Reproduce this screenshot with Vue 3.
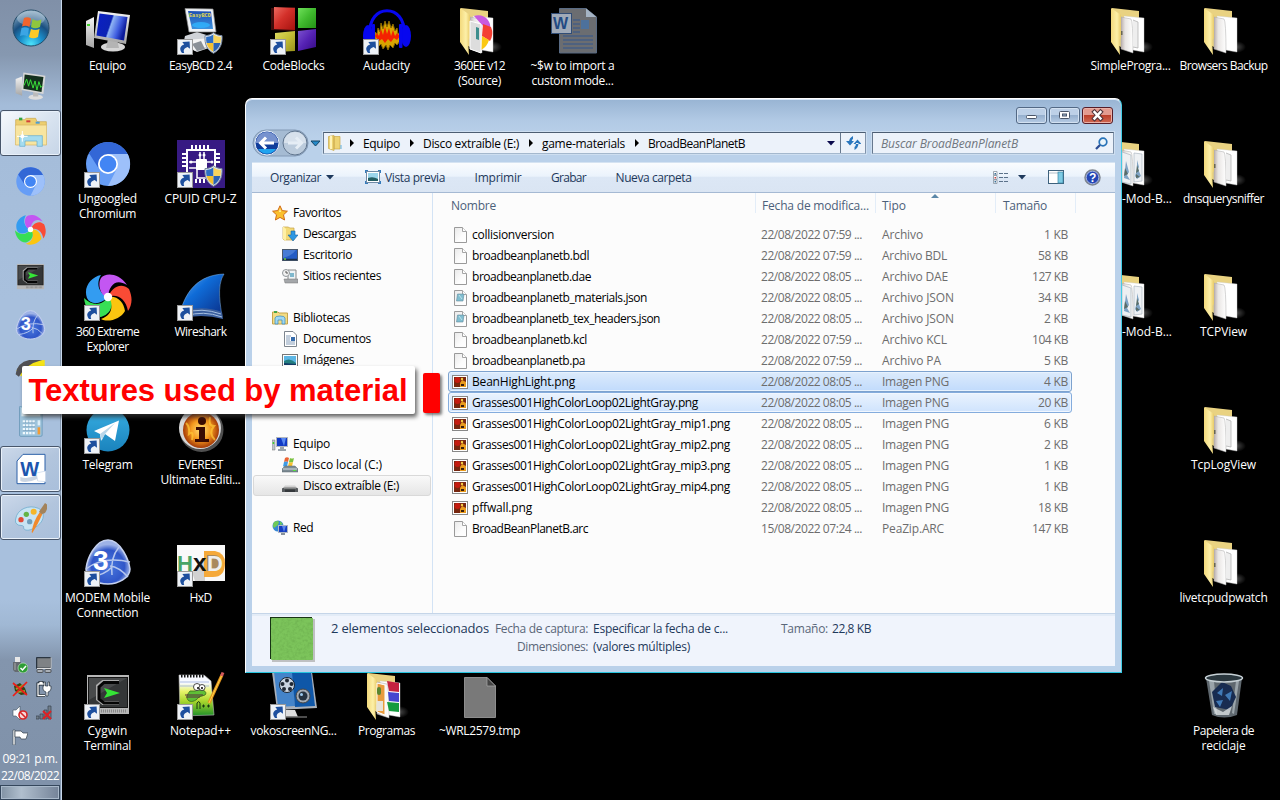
<script setup>
const vFit = {
  mounted(el, { value }) {
    const natural = el.getBoundingClientRect().width
    const count = el.textContent.length
    el.style.letterSpacing = ((value - natural) / count).toFixed(3) + 'px'
  },
}

// Lettering drawn on top of the icon artwork, in the icon's 48-unit grid
const SANS = 'Liberation Sans, sans-serif'
const letters = {
  easybcd: [{ x: 12, y: 10, s: 5.2, c: '#e6dc48', t: 'EasyBCD', f: 'Liberation Mono, monospace' }],
  worddoc: [{ x: 4, y: 22, s: 16, c: '#234a83', t: 'W', f: SANS }],
  word: [{ x: 8, y: 34, s: 30, c: '#1d55ae', t: 'W', f: SANS }],
  modem: [{ x: 9, y: 31, s: 28, c: '#fff', t: '3', f: SANS }],
  hxd: [
    { x: 0, y: 32, s: 22, c: '#49a568', t: 'H', f: SANS },
    { x: 16, y: 32, s: 24, c: '#111', t: 'x', f: SANS },
    { x: 30, y: 32, s: 22, c: '#efefef', t: 'D', f: SANS },
  ],
}

const desktop = [
  { x: 84, y: 7, icon: 'pc', lines: [['Equipo', 37]] },
  { x: 177, y: 7, icon: 'easybcd', cut: 1, shield: 1, lines: [['EasyBCD 2.4', 63]] },
  { x: 270, y: 7, icon: 'codeblocks', cut: 1, lines: [['CodeBlocks', 62]] },
  { x: 363, y: 7, icon: 'audacity', cut: 1, lines: [['Audacity', 47]] },
  { x: 456, y: 7, icon: 'folder360', lines: [['360EE v12', 51], ['(Source)', 43]] },
  { x: 549, y: 7, icon: 'worddoc', lines: [['~$w to import a', 84], ['custom mode...', 82]] },
  { x: 1107, y: 7, icon: 'folderb', lines: [['SimpleProgra...', 80]] },
  { x: 1200, y: 7, icon: 'folder', lines: [['Browsers Backup', 88]] },
  { x: 84, y: 140, icon: 'chromium', cut: 1, lines: [['Ungoogled', 59], ['Chromium', 57]] },
  { x: 177, y: 140, icon: 'cpuz', cut: 1, shield: 1, lines: [['CPUID CPU-Z', 72]] },
  { x: 1107, y: 140, icon: 'folderimg', lines: [['-Mod-B...', 50]], shift: 1 },
  { x: 1200, y: 140, icon: 'folderb', lines: [['dnsquerysniffer', 81]] },
  { x: 84, y: 273, icon: 'swirl', cut: 1, lines: [['360 Extreme', 63], ['Explorer', 42]] },
  { x: 177, y: 273, icon: 'wireshark', cut: 1, lines: [['Wireshark', 52]] },
  { x: 1107, y: 273, icon: 'folderimg', lines: [['-Mod-B...', 50]], shift: 1 },
  { x: 1200, y: 273, icon: 'folder', lines: [['TCPView', 47]] },
  { x: 84, y: 406, icon: 'telegram', cut: 1, lines: [['Telegram', 50]] },
  { x: 177, y: 406, icon: 'everest', lines: [['EVEREST', 45], ['Ultimate Editi...', 80]] },
  { x: 1200, y: 406, icon: 'folderb', lines: [['TcpLogView', 65]] },
  { x: 84, y: 539, icon: 'modem', cut: 1, lines: [['MODEM Mobile', 85], ['Connection', 62]] },
  { x: 177, y: 539, icon: 'hxd', cut: 1, lines: [['HxD', 22]] },
  { x: 1200, y: 539, icon: 'folderb', lines: [['livetcpudpwatch', 88]] },
  { x: 84, y: 672, icon: 'cygwin', cut: 1, lines: [['Cygwin', 40], ['Terminal', 47]] },
  { x: 177, y: 672, icon: 'notepad', cut: 1, lines: [['Notepad++', 61]] },
  { x: 270, y: 672, icon: 'voko', cut: 1, lines: [['vokoscreenNG...', 86]] },
  { x: 363, y: 672, icon: 'folderprog', lines: [['Programas', 57]] },
  { x: 456, y: 672, icon: 'tmp', lines: [['~WRL2579.tmp', 81]] },
  { x: 1200, y: 672, icon: 'bin', lines: [['Papelera de', 61], ['reciclaje', 44]] },
]

const pinned = [
  { icon: 'taskmgr' },
  { icon: 'explorer', state: 'active' },
  { icon: 'chromium' },
  { icon: 'swirl' },
  { icon: 'cygwin' },
  { icon: 'modem' },
  { icon: 'yellow' },
  { icon: 'calc' },
  { icon: 'word', state: 'open' },
  { icon: 'paint', state: 'open' },
]
const tray = ['usb', 'display', 'bug', 'power', 'mute', 'signal', 'flag']

const crumbs = [['Equipo', 37], ['Disco extraíble (E:)', 96], ['game-materials', 83], ['BroadBeanPlanetB', 97]]

const nav = [
  { icon: 'star', t: 'Favoritos', w: 48, top: 1 },
  { icon: 'downloads', t: 'Descargas', w: 53 },
  { icon: 'desk', t: 'Escritorio', w: 49 },
  { icon: 'recent', t: 'Sitios recientes', w: 78 },
  {},
  { icon: 'libs', t: 'Bibliotecas', w: 57, top: 1 },
  { icon: 'doc', t: 'Documentos', w: 68 },
  { icon: 'pic', t: 'Imágenes', w: 51 },
  {}, {}, {},
  { icon: 'pc16', t: 'Equipo', w: 37, top: 1 },
  { icon: 'drivec', t: 'Disco local (C:)', w: 79 },
  { icon: 'drivee', t: 'Disco extraíble (E:)', w: 96, sel: 1 },
  {},
  { icon: 'net', t: 'Red', w: 20, top: 1 },
]

const A = '22/08/2022 07:59 ...'
const B = '22/08/2022 08:05 ...'
const files = [
  ['file', 'collisionversion', 82, A, 'Archivo', 41, '1 KB', 24],
  ['file', 'broadbeanplanetb.bdl', 117, A, 'Archivo BDL', 65, '58 KB', 30],
  ['file', 'broadbeanplanetb.dae', 119, B, 'Archivo DAE', 66, '127 KB', 36],
  ['json', 'broadbeanplanetb_materials.json', 175, B, 'Archivo JSON', 72, '34 KB', 30],
  ['json', 'broadbeanplanetb_tex_headers.json', 188, B, 'Archivo JSON', 72, '2 KB', 24],
  ['file', 'broadbeanplanetb.kcl', 115, A, 'Archivo KCL', 65, '104 KB', 36],
  ['file', 'broadbeanplanetb.pa', 113, A, 'Archivo PA', 59, '5 KB', 24],
  ['png', 'BeanHighLight.png', 103, B, 'Imagen PNG', 67, '4 KB', 24, 'strong'],
  ['png', 'Grasses001HighColorLoop02LightGray.png', 226, B, 'Imagen PNG', 67, '20 KB', 30, 'soft'],
  ['png', 'Grasses001HighColorLoop02LightGray_mip1.png', 258, B, 'Imagen PNG', 67, '6 KB', 24],
  ['png', 'Grasses001HighColorLoop02LightGray_mip2.png', 258, B, 'Imagen PNG', 67, '2 KB', 24],
  ['png', 'Grasses001HighColorLoop02LightGray_mip3.png', 258, B, 'Imagen PNG', 67, '1 KB', 24],
  ['png', 'Grasses001HighColorLoop02LightGray_mip4.png', 258, B, 'Imagen PNG', 67, '1 KB', 24],
  ['png', 'pffwall.png', 60, B, 'Imagen PNG', 67, '18 KB', 30],
  ['file', 'BroadBeanPlanetB.arc', 116, '15/08/2022 07:24 ...', 'PeaZip.ARC', 62, '147 KB', 36],
]
</script>

<template>
  <div class="screen">
    <svg class="defs" width="0" height="0">
      <defs>
        <linearGradient id="gFold" x1="0" y1="0" x2="1" y2="0"><stop offset="0" stop-color="#f3d97c" /><stop offset=".6" stop-color="#fdf0a8" /><stop offset="1" stop-color="#e8ca68" /></linearGradient>
        <linearGradient id="gPage" x1="0" y1="0" x2="1" y2="0"><stop offset="0" stop-color="#b9aeac" /><stop offset=".35" stop-color="#e9e6e4" /><stop offset="1" stop-color="#fff" /></linearGradient>
        <linearGradient id="gScr" x1="0" y1="0" x2="1" y2=".3"><stop offset="0" stop-color="#0a1fc4" /><stop offset=".5" stop-color="#0b22b4" /><stop offset=".55" stop-color="#8fb4f4" /><stop offset=".8" stop-color="#3f5de0" /><stop offset="1" stop-color="#0b1a9a" /></linearGradient>
        <linearGradient id="gSilver" x1="0" y1="0" x2="0" y2="1"><stop offset="0" stop-color="#f4f4f4" /><stop offset="1" stop-color="#a5a5a5" /></linearGradient>
        <linearGradient id="gFin" x1="0" y1="0" x2="1" y2="1"><stop offset="0" stop-color="#6db0f0" /><stop offset=".4" stop-color="#0f6cd8" /><stop offset="1" stop-color="#0a2c84" /></linearGradient>
        <linearGradient id="gTele" x1="0" y1="0" x2="0" y2="1"><stop offset="0" stop-color="#37aee2" /><stop offset="1" stop-color="#1a83bd" /></linearGradient>
        <linearGradient id="gBlue" x1="0" y1="0" x2="0" y2="1"><stop offset="0" stop-color="#1c4fb4" /><stop offset="1" stop-color="#3d92de" /></linearGradient>
        <linearGradient id="gRed" x1="0" y1="0" x2="1" y2="1"><stop offset="0" stop-color="#ee6a60" /><stop offset=".45" stop-color="#d3302a" /><stop offset="1" stop-color="#a5120e" /></linearGradient>
        <linearGradient id="gGreen" x1="0" y1="0" x2="1" y2="1"><stop offset="0" stop-color="#6fe05a" /><stop offset=".5" stop-color="#3fb92d" /><stop offset="1" stop-color="#249216" /></linearGradient>
        <linearGradient id="gYel" x1="0" y1="0" x2="1" y2="1"><stop offset="0" stop-color="#dedb62" /><stop offset=".5" stop-color="#c3bd35" /><stop offset="1" stop-color="#97911a" /></linearGradient>
        <linearGradient id="gVio" x1="0" y1="0" x2="1" y2="1"><stop offset="0" stop-color="#7d54d0" /><stop offset=".5" stop-color="#5522b4" /><stop offset="1" stop-color="#350a84" /></linearGradient>
        <linearGradient id="gFile" x1="0" y1="0" x2="1" y2="1"><stop offset="0" stop-color="#e9e9e9" /><stop offset=".6" stop-color="#fcfcfc" /><stop offset="1" stop-color="#fff" /></linearGradient>
        <linearGradient id="gNpp" x1="0" y1="0" x2="0" y2="1"><stop offset=".2" stop-color="#f7f9ff" /><stop offset=".4" stop-color="#e8f46a" /><stop offset=".65" stop-color="#a5d52c" /><stop offset="1" stop-color="#1d8f2a" /></linearGradient>
        <radialGradient id="gOrb" cx=".5" cy=".95" r=".9"><stop offset="0" stop-color="#4de4fb" /><stop offset=".35" stop-color="#1a8fcc" /><stop offset=".65" stop-color="#1a4f80" /><stop offset="1" stop-color="#7fa2bd" /></radialGradient>
        <radialGradient id="gFire"><stop offset="0" stop-color="#ffe27a" /><stop offset=".55" stop-color="#f59a1e" /><stop offset="1" stop-color="#a53a08" /></radialGradient>
        <radialGradient id="gModem" cx=".5" cy=".6"><stop offset="0" stop-color="#4a7ae0" /><stop offset=".75" stop-color="#3056c8" /><stop offset="1" stop-color="#9db2e6" /></radialGradient>
        <radialGradient id="gShade"><stop offset="0" stop-color="#fff" stop-opacity=".3" /><stop offset="1" stop-color="#fff" stop-opacity="0" /></radialGradient>
      </defs>

      <symbol id="cut" viewBox="0 0 16 16"><rect x=".5" y=".5" width="15" height="15" fill="#eef2f7" stroke="#9a9a9a" /><path d="M5 14C1.8 10 3.2 7 7.2 5.6L5.3 3.1 12.6 2.5 13 9.8 10.6 8C7.4 9 6 10.8 7.2 14Z" fill="#1d4f9e" /></symbol>
      <symbol id="shield" viewBox="0 0 19 22"><path d="M9.5.7C12 2.6 15 3.6 18 3.6 18.6 12 16 18 9.5 21.3 3 18 .4 12 1 3.6 4 3.6 7 2.6 9.5.7Z" fill="#dfe6ee" stroke="#75859a" /><path d="M9.5 2.5V11H2.6C2.1 9 2 7 2.2 5Q6.5 4.6 9.5 2.5" fill="#2e6fc4" /><path d="M9.5 2.5Q12.5 4.6 16.8 5 17 7 16.4 11H9.5" fill="#f7d45c" /><path d="M2.6 11H9.5V20Q4 17 2.6 11" fill="#f3c030" /><path d="M16.4 11H9.5V20Q15 17 16.4 11" fill="#2a62b4" /></symbol>
      <symbol id="pc" viewBox="0 0 48 48"><path d="M2 14 10 10V41L2 38Z" fill="url(#gSilver)" /><rect x="3" y="17" width="3" height="2" fill="#45d22f" /><ellipse cx="29" cy="40" rx="12" ry="4.5" fill="#d5d5d5" /><path d="M24 32h9l2 9H22Z" fill="#b4b4b4" /><path d="M14 4 46 8 42 37 10 31Z" fill="url(#gSilver)" /><path d="M15.5 6.5 43.5 10 40 33.500 12.500 28.500Z" fill="url(#gScr)" /></symbol>
      <symbol id="easybcd" viewBox="0 0 48 48"><path d="M8 29 20 25 36 30 38 39 20 45 6 38Z" fill="#d0d3d8" /><path d="M7 33 36 31V37L18 44Z" fill="#f4f4f4" /><path d="M15 37 24 34 28 42 20 44Z" fill="#8a9097" /><path d="M8 1.500 36 2 39 25 12 25Z" fill="#eef1f5" stroke="#8b8b8b" stroke-width=".7" /><path d="M11 4 34 4.500 36 22 15 22Z" fill="url(#gBlue)" /><ellipse cx="24" cy="18" rx="9" ry="3" fill="#2fb4ff" opacity=".8" /></symbol>
      <symbol id="codeblocks" viewBox="0 0 48 48"><path d="M1 1 25 0V24L1 23Z" fill="#400b0b" /><path d="M4 0 25 1V23L4 22Z" fill="url(#gRed)" /><path d="M28 1 46 1V21H28Z" fill="url(#gGreen)" /><path d="M5 26 25 24V44L5 45Z" fill="url(#gYel)" /><path d="M28 24 46 22V40L28 44Z" fill="url(#gVio)" /></symbol>
      <symbol id="audacity" viewBox="0 0 48 48"><path d="M12 33 12 25 14 27 15 21 17 25 18 16 20 22 22 14 24 20 26 14 28 21 30 17 32 24 34 21 35 27 37 25V34L34 38 32 36 30 41 27 38 25 43 23 38 20 42 18 37 16 39 14 35Z" fill="#d9a400" stroke="#8a6a00" stroke-width="1" /><path d="M12 29 14 26 16 29 18 22 20 28 22 20 24 27 26 21 28 29 30 23 32 29 34 26 37 29 34 33 31 31 28 35 25 32 22 36 19 32 16 34Z" fill="#f42200" /><path d="M7 27C5-4 43-4 41 27" fill="none" stroke="#0707ef" stroke-width="3.200" /><ellipse cx="5" cy="29" rx="5" ry="11" fill="#0707ef" /><rect x="9" y="17" width="3" height="24" rx="1" fill="#0707ef" /><ellipse cx="43" cy="29" rx="5" ry="11" fill="#0707ef" /><rect x="36" y="17" width="3.500" height="24" rx="1" fill="#0707ef" /></symbol>

      <symbol id="folder" viewBox="0 0 48 48"><ellipse cx="36" cy="40" rx="10" ry="6" fill="url(#gShade)" /><path d="M5 1 32 4V12L14 40 5 35Z" fill="#e9d281" /><path d="M17 9 37 11V45L20 42Z" fill="#fff" stroke="#ccc" stroke-width=".4" /><path d="M14 10 24 12Q26 14 26 46L14 42Z" fill="url(#gPage)" stroke="#aaa" stroke-width=".5" /><path d="M4 1 14 8V31L12 33 13 48 4 35Z" fill="url(#gFold)" /></symbol>
      <symbol id="folderb" viewBox="0 0 48 48"><use href="#folder" width="48" height="48" /><path d="M26 13 31 15V41L26 40" fill="#eee" stroke="#b4b4b4" stroke-width=".8" /><rect x="14" y="24" width="1.500" height="4" fill="#665" /></symbol>
      <symbol id="folder360" viewBox="0 0 48 48"><use href="#folder" width="48" height="48" /><path d="M18 9C28 6 36 14 34 23L26 18Z" fill="#c95ae0" /><path d="M27 17 35 20Q38 27 34 34L26 29Z" fill="#f43f32" /><path d="M26 29 33 33Q31 40 25 43Z" fill="#fbc812" /><path d="M14 14 25 17V46L14 42Z" fill="#ddd" stroke="#fff" /><path d="M20 20 23 21V33L20 32Z" fill="#3d8e8d" /></symbol>
      <symbol id="folderimg" viewBox="0 0 48 48"><use href="#folder" width="48" height="48" /><path d="M27 13 35 14V41L27 42Z" fill="#eef1f4" stroke="#aeb7c2" stroke-width=".7" /><path d="M15 12 24 15V44L15 42Z" fill="#edf0f2" stroke="#aeb7c2" stroke-width=".7" /><path d="M30 20 32 27 31 29 34 36 30 39 28 36 30 29ZM19 21 22 32 20 35 23 40 17 38Z" fill="#7fa3c4" /><path d="M30 25 32 31 29 33ZM29 34 33 37 29 38ZM18 28 21 34 17 36Z" fill="#586c68" /></symbol>
      <symbol id="folderprog" viewBox="0 0 48 48"><use href="#folder" width="48" height="48" /><path d="M24 9 36 11V20L26 19Z" fill="#c42340" /><path d="M25 20 36 21V30L26 29Z" fill="#4545cf" /><path d="M24 30 36 31V40L26 39Z" fill="#149b3e" /><path d="M14 11 22 13V43L14 40Z" fill="#e89b3d" stroke="#fff" /><rect x="14" y="15" width="4" height="8" rx="2" fill="#5a8631" /><rect x="14" y="29" width="6" height="10" fill="#e7e3d9" /></symbol>
      <symbol id="worddoc" viewBox="0 0 48 48"><path d="M10.500 1.500H37L47.500 10V46H10.500Z" fill="#6b6d71" stroke="#596b84" /><path d="M37 1.500V10H47.500Z" fill="#a5b4c4" /><path d="M24 13H31M24 17H31M24 21H31M24 25H31M14 29H44M14 33H44M14 37H44M14 41H44" stroke="#465e84" stroke-width="1.300" /><rect x="32" y="13" width="8" height="9" fill="#4d719c" /><rect x="2.500" y="6.500" width="20" height="20" fill="#a0aab8" stroke="#314d76" /></symbol>
      <symbol id="chromium" viewBox="0 0 48 48"><circle cx="24" cy="24" r="22" fill="#669df6" /><path d="M4.900 13A22 22 0 0 1 44 15H24A10 10 0 0 0 15 29Z" fill="#3367d6" /><path d="M24 14H43.700A22 22 0 0 1 24 46L32.500 29.500Z" fill="#9dc0fa" /><circle cx="24" cy="24" r="10" fill="#fff" /><circle cx="24" cy="24" r="8.300" fill="#4285f4" /></symbol>
      <symbol id="cpuz" viewBox="0 0 48 48"><rect width="48" height="48" fill="#371a83" /><path d="M15 5v4m4-4v4m4-4v4m4-4v4m4-4v4M19 39v4m4-4v4m4-4v4M5 14h4M5 18h4M5 22h4M5 26h4M39 14h4m-4 4h4m-4 4h4" stroke="#fff" stroke-width="2" /><path d="M10 32V10H38V27" fill="none" stroke="#fff" stroke-width="2" /><path d="M12 22H22M12 28H24M23 12V20M27 12V20M28 22H36M20 28V38H35" fill="none" stroke="#fff" stroke-width="1.500" /><rect x="19" y="19" width="11" height="11" rx="1" fill="#fff" /><circle cx="14" cy="22" r="1.500" fill="#fff" /><circle cx="23" cy="15" r="1.500" fill="#fff" /><circle cx="27" cy="15" r="1.500" fill="#fff" /><circle cx="35" cy="22" r="1.500" fill="#fff" /></symbol>
      <symbol id="swirl" viewBox="0 0 48 48"><path d="M24 24C27 16 36 8 45 16 49 25 48 32 44 38 42 26 33 20 24 24Z" fill="#fa4b35" /><path d="M24 24C33 22 40 29 41 38 37 46 24 50 17 46 28 42 30 34 24 24Z" fill="#fbc510" /><path d="M24 24C31 31 27 41 17 44 7 44 1 35 0 25 8 33 18 33 24 24Z" fill="#37df55" /><path d="M24 24C17 32 6 32 3 25-1 14 7 4 17 2 11 12 16 21 24 24Z" fill="#339cf1" /><path d="M24 24C17 24 13 12 17 5 21 0 34-1 43 12 32 5 25 12 24 24Z" fill="#c356f2" /><circle cx="24" cy="24" r="4.200" fill="#fff" /></symbol>
      <symbol id="wireshark" viewBox="0 0 48 48"><path d="M3 40C9 17 22 2 47 1 39 13 44 34 45 44Q20 35 2 42Z" fill="url(#gFin)" stroke="#87b7e5" stroke-width=".5" /><path d="M2 40Q23 31 45 39L46 46Q24 40 2 46Z" fill="#3b5f9d" /><path d="M8 40Q24 34 44 41M9 43Q26 37 45 44" fill="none" stroke="#a6bfdf" /></symbol>
      <symbol id="telegram" viewBox="0 0 48 48"><circle cx="24" cy="24" r="21.500" fill="url(#gTele)" /><path d="M10 25 35 14.500 31 35 21 28 17 35 16 28Z" fill="#fff" /><path d="M16 28 31 17 21 28 18 34Z" fill="#b8d6e9" /></symbol>
      <symbol id="everest" viewBox="0 0 48 48"><circle cx="24.500" cy="24" r="22" fill="#4f4f4f" /><circle cx="23" cy="22" r="21" fill="#d7d7d7" /><circle cx="24" cy="24" r="18" fill="url(#gFire)" /><path d="M9 17Q13 21 12 28 17 24 15 34M33 11Q31 20 37 20 31 27 38 34" stroke="#ffca38" stroke-width="2" fill="none" opacity=".7" /><circle cx="25" cy="15" r="4" fill="#390b02" /><path d="M19 21H28V33H32V36H18V33H22V24H19Z" fill="#390b02" /></symbol>
      <symbol id="modem" viewBox="0 0 48 48"><path d="M24 1C37 1 45 22 46 30 46 39 34 45 24 45 12 45 2 39 2 30 3 20 11 1 24 1Z" fill="url(#gModem)" stroke="#c5d1ef" stroke-width="1.500" /><path d="M35 8Q26 19 28 36M2 30Q19 17 46 23M26 27Q35 28 44 38M28 28Q21 36 6 38" fill="none" stroke="#b6c7ee" stroke-width="1.500" /></symbol>
      <symbol id="hxd" viewBox="0 0 48 48"><rect y="6" width="48" height="36" fill="#f9f9f9" /><path d="M15 33 28 21V42H18Z" fill="#aaa" opacity=".5" /><path d="M27 12H38Q48 14 48 24 48 38 36 38H27Z" fill="#f5a93a" /><path d="M30 16V32H38Q44 30 44 24 44 16 37 16Z" fill="#777" opacity=".6" /></symbol>
      <symbol id="cygwin" viewBox="0 0 48 48"><rect x="3" y="3" width="42" height="39" fill="#b7b7b7" /><rect x="4.500" y="5.500" width="39" height="30" fill="#343637" stroke="#151515" /><path d="M5 6H43L5 28Z" fill="#595b5c" opacity=".55" /><path d="M35 10H19L14 14V27L19 31H35" fill="none" stroke="#aaa" stroke-width="4" /><path d="M35 10.500H20L15 15V27L20 31H35" fill="none" stroke="#050505" stroke-width="3" /><path d="M20 16 36 21 20 26 23 21Z" fill="#35e536" /><path d="M17 39H43" stroke="#888" stroke-width="3" stroke-dasharray="1 1" /></symbol>
      <symbol id="notepad" viewBox="0 0 48 48"><path d="M2 3H27L34 9 37 43 3 44Z" fill="url(#gNpp)" stroke="#bbb" stroke-width=".6" /><path d="M4 4H27" stroke="#111" stroke-width="3" stroke-dasharray="1.500 1.500" /><path d="M3 10H32M3 14H32" stroke="#8da4d5" stroke-width=".7" /><path d="M13 19C5 28 15 34 22 25L28 23C31 20 26 16 18 19Z" fill="#5fbf36" stroke="#3b6b19" stroke-width=".8" /><circle cx="20" cy="15" r="3.500" fill="#fff" stroke="#222" stroke-width=".8" /><circle cx="25" cy="15.500" r="3" fill="#fff" stroke="#222" stroke-width=".8" /><circle cx="21" cy="16" r="1" /><circle cx="25" cy="16" r="1" /><path d="M8 23H26M9 25H23" stroke="#5a2c3c" stroke-width="1" /><path d="M20 37V31Q22 28 23 31V37M25 34H28M30 34H33M26.500 32.500V35.500M31.500 32.500V35.500" fill="none" stroke="#183712" stroke-width="1" /><path d="M32 31 45 3" stroke="#e2941d" stroke-width="3" /><path d="M32 31 45 3" stroke="#ffd24a" stroke-width="1" /><path d="M44.500 4 46 .5" stroke="#d3595b" stroke-width="3" /></symbol>
      <symbol id="voko" viewBox="0 0 48 48"><path d="M2 0H42L47 36 7 38Z" fill="#aab1bb" /><path d="M4 0H23L25 34 8 35Z" fill="#4484ca" /><path d="M22 0H41L45 34 25 35Z" fill="#0f57a8" /><path d="M16 38H25L28 45 16 45Z" fill="#ddd" /><path d="M13 45H37" stroke="#666" stroke-width="1.500" /><circle cx="17" cy="13" r="7.500" fill="#c9d3e0" stroke="#1a2430" /><circle cx="17" cy="8.500" r="2" fill="#1f2733" /><circle cx="12.500" cy="12" r="2" fill="#1f2733" /><circle cx="21.500" cy="12" r="2" fill="#1f2733" /><circle cx="14" cy="17" r="2" fill="#1f2733" /><circle cx="20" cy="17" r="2" fill="#1f2733" /><circle cx="33" cy="24" r="7" fill="#a4abb4" stroke="#444" /><circle cx="33" cy="24" r="4.500" fill="#263341" /><circle cx="31.500" cy="22.500" r="1.500" fill="#9cc8ee" /></symbol>
      <symbol id="tmp" viewBox="0 0 48 48"><path d="M8.500 5.500H31L39.500 14V45.500H8.500Z" fill="#797979" stroke="#8d8d8d" /><path d="M31 5.500V14H39.500Z" fill="#444" stroke="#aaa" stroke-width=".7" /></symbol>
      <symbol id="bin" viewBox="0 0 48 48"><path d="M6 6 42 6 37 43Q24 48 12 43Z" fill="#7f8b94" opacity=".75" /><path d="M9 9 14 42H17L14 9M36 9 32 41 34 42 39 9" fill="#d5e0e6" opacity=".5" /><path d="M12 20 22 10 31 14 36 25 30 38 15 35Z" fill="#182c51" /><path d="M17 21 23 16 22 24ZM25 23 32 19 30 29ZM16 29 23 28 20 35Z" fill="#407ab7" /><path d="M13 35 23 40 32 34 29 43 16 43Z" fill="#dbe0e2" opacity=".8" /><ellipse cx="24" cy="6" rx="18.500" ry="4" fill="#29363d" stroke="#c6d0d5" stroke-width="1.500" /></symbol>

      <symbol id="orb" viewBox="0 0 38 38"><circle cx="19" cy="19" r="18" fill="url(#gOrb)" stroke="#244c68" /><ellipse cx="19" cy="9" rx="14" ry="7.500" fill="#fff" opacity=".28" /><path d="M12 9Q15.500 7.500 19 9.500L17.500 18Q14 16 10 17.500Z" fill="#f0642d" /><path d="M20.500 10Q25 13 29.500 10.500L28 18Q23 20.500 19 18Z" fill="#8fc63d" /><path d="M9.500 19Q13.500 17.500 17 19.500L15.500 27.500Q12 25.500 8 27Z" fill="#3ba5e5" /><path d="M19 20Q23 22 27.500 20L26 28Q21 30.500 17 28Z" fill="#fdc927" /></symbol>
      <symbol id="taskmgr" viewBox="0 0 48 48"><path d="M1 14 11 10V40L1 36Z" fill="url(#gSilver)" /><ellipse cx="32" cy="42" rx="11" ry="4" fill="#ddd" /><path d="M28 32h8v9h-8" fill="#bbb" /><path d="M13 4 47 9 44 37 10 31Z" fill="#d7d7d7" /><path d="M15 7 44 11 41 34 13 29Z" fill="#14301d" /><path d="M14 24 18 14 21 25 24 15 28 28 31 17 34 31 37 18 40 27 43 24" fill="none" stroke="#3ae13a" stroke-width="1.500" /></symbol>
      <symbol id="explorer" viewBox="0 0 48 48"><path d="M1 13V4H14L17 2H31L33 7H47V12" fill="#edcf70" stroke="#c9a64c" /><rect x="6" y="1" width="5" height="4" fill="#32a542" /><rect x="17" y="5" width="6" height="3" fill="#d3413a" /><rect x="31" y="7" width="6" height="3" fill="#4a9ed6" /><path d="M.7 12H47.300V42H.7Z" fill="#f8e5a0" stroke="#d6b45d" /><path d="M7 28H41V44H33V36H15V44H7Z" fill="#a5dcef" stroke="#5fabd0" /><path d="M11 21V37M3 29H19" stroke="#fff" stroke-width="1.500" /><circle cx="11" cy="29" r="3" fill="#fff" /></symbol>
      <symbol id="yellow" viewBox="0 0 48 48"><path d="M2 20Q8 6 46 3V25L8 28Q8 22 13 19Z" fill="#f5e316" /><path d="M1 25Q3 7 22 3L42 3Q17 9 6 29Z" fill="#505054" /></symbol>
      <symbol id="calc" viewBox="0 0 48 48"><rect x="7" y="0" width="35" height="47" rx="2" fill="#9ec4dc" stroke="#598cac" /><rect x="10" y="3" width="29" height="13" fill="#e4f3f9" /><path d="M12 24H31M12 30H31M12 36H31M12 42H31" stroke="#eff8fd" stroke-width="3.500" stroke-dasharray="3.500 1.500" /><path d="M12 26H31M12 32H31M12 38H31" stroke="#5c89aa" stroke-width=".8" /><rect x="35" y="22" width="4" height="8" fill="#dceef8" /><rect x="35" y="33" width="4" height="11" fill="#f29b34" /></symbol>
      <symbol id="word" viewBox="0 0 48 48"><path d="M12 2H45V46H3V12Z" fill="#fff" stroke="#2c61a8" stroke-width="1.500" /><path d="M8 36Q20 40 34 32L36 38Q18 46 8 42Z" fill="#a9b9ce" opacity=".6" /><path d="M32 30 46 27V43L34 42Z" fill="#fff" stroke="#c5d5e8" /></symbol>
      <symbol id="paint" viewBox="0 0 48 48"><path d="M1 27C3 12 21 5 35 11 45 15 45 29 34 37 23 46 13 45 13 40 14 36 8 37 5 36 1 34 0 31 1 27Z" fill="#c8e4f3" stroke="#5fa4c8" /><circle cx="9" cy="28" r="4" fill="#e24a36" /><circle cx="17" cy="20" r="4" fill="#63b446" /><circle cx="28" cy="16" r="4.500" fill="#f5b629" /><circle cx="22" cy="31" r="4" fill="#6f9ebb" /><path d="M25 47Q27 31 37 17L41 20Q34 36 26 48Z" fill="#f0892b" /><path d="M38 13 45 3 49 6Q49 12 45 18L40 20 36 16Z" fill="#a3835b" /></symbol>

      <symbol id="usb" viewBox="0 0 16 16"><rect x="3" y="0" width="5" height="5" fill="#e8e8e8" /><path d="M1 5H9V13L7 15H3L1 13Z" fill="#656b70" /><path d="M3 6V13" stroke="#aaa" /><circle cx="11" cy="11" r="5" fill="#2e9d35" stroke="#d3e9d4" stroke-width=".6" /><path d="M8.500 11 10.500 13 14 9" fill="none" stroke="#fff" stroke-width="1.500" /></symbol>
      <symbol id="display" viewBox="0 0 16 16"><rect x=".7" y=".7" width="14" height="10.500" fill="#7f8285" stroke="#16202a" /><path d="M1 11.500H15V.500" stroke="#ddd" fill="none" /><rect x="1" y="12.500" width="6" height="3" rx="1" fill="#aab0b7" stroke="#333" stroke-width=".7" /><rect x="9" y="12.500" width="6" height="3" rx="1" fill="#aab0b7" stroke="#333" stroke-width=".7" /></symbol>
      <symbol id="bug" viewBox="0 0 16 16"><path d="M2 5 8 2 13 7 15 13 9 14 3 10Z" fill="#364417" /><path d="M4 8 12 4M5 11 13 10" stroke="#9c9d28" stroke-width="2" /><path d="M1 2 15 14M15 1 1 15" stroke="#ec1d17" stroke-width="1.700" /></symbol>
      <symbol id="power" viewBox="0 0 16 16"><path d="M9 14.500H2V3H8M4 3V1.500H6V3" fill="none" stroke="#16202a" stroke-width="3" /><path d="M9 14.500H2V3H8M4 3V1.500H6V3" fill="none" stroke="#fff" stroke-width="1.300" /><path d="M8 1H9.500V5H12V1H13.500V5H15V8Q14 11 12 11V15H10V11Q7 10 7 8V5H8Z" fill="#fff" stroke="#27323d" stroke-width=".7" /></symbol>
      <symbol id="mute" viewBox="0 0 16 16"><path d="M1 5H4L8 1V15L4 11H1Z" fill="#fff" stroke="#405060" stroke-width=".6" /><circle cx="11" cy="10" r="4" fill="#f5dada" stroke="#d72626" stroke-width="1.600" /><path d="M8 7 14 13" stroke="#d72626" stroke-width="1.600" /></symbol>
      <symbol id="signal" viewBox="0 0 16 16"><path d="M0 14H3V11H0ZM4 14H7V9H4ZM8 14H11V5H8ZM12 14H15V1H12Z" fill="#727e8a" stroke="#38444f" stroke-width=".7" /><path d="M7 6 15 14M15 6 7 14" stroke="#de2023" stroke-width="2" /></symbol>
      <symbol id="flag" viewBox="0 0 16 16"><path d="M1 1H3V16H1Z" fill="#fff" stroke="#33404b" stroke-width=".6" /><path d="M3 2H9L11 4H16L14 10H9L8 8H3Z" fill="#fff" stroke="#33404b" stroke-width=".7" /></symbol>

      <symbol id="star" viewBox="0 0 16 16"><path d="M8 .8 10.200 5.600 15.400 6.200 11.500 9.800 12.600 15 8 12.400 3.400 15 4.500 9.800.6 6.200 5.800 5.600Z" fill="#fbc02d" stroke="#d06a17" /><path d="M8 3 9 7H7Z" fill="#fff1a6" /></symbol>
      <symbol id="downloads" viewBox="0 0 16 16"><path d="M1 1H6L8 2H12V14H2L1 13Z" fill="#f3da77" stroke="#c6a245" stroke-width=".7" /><path d="M2 1 4 3V15L1 13V1Z" fill="#fff0a5" /><path d="M9 5H13V9H16L11 15 6 9H9Z" fill="#2d98e3" stroke="#1a65a5" stroke-width=".6" /></symbol>
      <symbol id="desk" viewBox="0 0 16 16"><rect x=".5" y="2.500" width="15" height="11" fill="#235cc5" stroke="#4b596c" /><path d="M1 3H14Q10 9 1 11Z" fill="#5789dc" opacity=".7" /><path d="M1 12.500H15" stroke="#192f4b" stroke-width="1.500" /><circle cx="3" cy="12" r="1" fill="#6ad13d" /></symbol>
      <symbol id="recent" viewBox="0 0 16 16"><path d="M6 2H14V12H6Z" fill="#eef3f5" stroke="#888" /><path d="M8 5H12V9H8Z" fill="#7fb8cd" /><path d="M2 11H16V15H3Z" fill="#a4a7aa" stroke="#777" stroke-width=".5" /><circle cx="4" cy="5" r="3.500" fill="#f1f1f1" stroke="#90969a" /><path d="M4 3V5H6" stroke="#555" fill="none" /></symbol>
      <symbol id="libs" viewBox="0 0 16 16"><path d="M.5 14V2H6L7 3H15.500V14Z" fill="#f3dc83" stroke="#c5a44d" /><rect x="2" y="1" width="3" height="2" fill="#43a34b" /><path d="M3 8Q3 6 8 6T13 8V14H10V10H6V14H3Z" fill="#9ed7f2" stroke="#3887ba" stroke-width=".7" /></symbol>
      <symbol id="doc" viewBox="0 0 16 16"><path d="M2.500.500H11L14.500 4V15.500H2.500Z" fill="#fff" stroke="#7d858e" /><path d="M4 5H9M4 7H8M4 9H8M4 11H13M4 13H13" stroke="#859db9" /><rect x="9" y="6" width="4" height="4" fill="#356bab" /></symbol>
      <symbol id="pic" viewBox="0 0 16 16"><rect x=".5" y="2.500" width="15" height="12" fill="#fff" stroke="#777" /><rect x="2" y="4" width="12" height="9" fill="#5cb6e4" /><path d="M2 9Q8 5 14 11V13H2Z" fill="#247e80" /><path d="M2 11 14 12V13H2" fill="#153b66" /></symbol>
      <symbol id="pc16" viewBox="0 0 16 16"><path d="M0 4H3V14H0Z" fill="#bcc3c9" stroke="#777" stroke-width=".5" /><rect x=".7" y="6" width="1.500" height="2" fill="#43cf32" /><rect x="4.500" y="1.500" width="11" height="9" fill="#113ac4" stroke="#b2b7bf" /><path d="M9 2H14L12 10Z" fill="#5a8af1" /><path d="M8 11H12V13H14V15H6V13H8Z" fill="#9ba4ac" /></symbol>
      <symbol id="drivec" viewBox="0 0 16 16"><path d="M3 1Q5-.5 7 1L6 5Q4 4 2 5Z" fill="#eb6434" /><path d="M8 1Q10 2 12 1L11 5Q9 6 7 5Z" fill="#7ac13f" /><path d="M2 5Q4 4 6 5L5 9.500H1Z" fill="#3e9ce5" /><path d="M7 5Q9 6 11 5L10 9.500H6Z" fill="#f8c12e" /><path d="M3 9H13L16 12V15H0V12Z" fill="#7c8b93" stroke="#5b676e" stroke-width=".5" /><path d="M1 12H15" stroke="#d5dce1" /><rect x="11" y="13" width="3" height="1" fill="#52df3b" /></symbol>
      <symbol id="drivee" viewBox="0 0 16 16"><path d="M3 7.500H13L16 11H0Z" fill="#d0d0d0" /><path d="M0 11Q0 9.500 3 9.500H13Q16 9.500 16 11V14H0Z" fill="#565a5d" /><path d="M3 14V11.500H13V14Z" fill="#34383b" /><path d="M2 10H14" stroke="#aaa" /></symbol>
      <symbol id="net" viewBox="0 0 16 16"><circle cx="6" cy="6" r="5.500" fill="#3687d6" /><path d="M2 2Q6 0 7 2L6 5 2 8Q0 6 2 2M8 1 11 4 8 5Z" fill="#6fca58" /><rect x="6.500" y="5.500" width="9" height="7" fill="#173fc1" stroke="#aeb7c4" /><path d="M10 6H14L12 12Z" fill="#5c86eb" /><path d="M9 13H13V15H9Z" fill="#87919d" /></symbol>

      <symbol id="file" viewBox="0 0 16 16"><path d="M2.500.500H10.500L14.500 4.500V15.500H2.500Z" fill="url(#gFile)" stroke="#9a9a9a" /><path d="M10.500.500V4.500H14.500" fill="#fff" stroke="#a5a5a5" /></symbol>
      <symbol id="json" viewBox="0 0 16 16"><use href="#file" width="16" height="16" /><path d="M5.500 4H12L11 11H4.500Z" fill="#81bed0" stroke="#62899c" stroke-width=".6" /><path d="M7 5 10 9" stroke="#c2e4ec" /></symbol>
      <symbol id="png" viewBox="0 0 16 16"><rect x=".5" y="1.500" width="15" height="13" fill="#fff" stroke="#888" /><rect x="2" y="3" width="12" height="10" fill="#77260f" /><circle cx="5.500" cy="6" r="3" fill="#c31b10" /><path d="M8 9 10 6 14 8V13H8Z" fill="#e99b1d" /><circle cx="10" cy="5" r="1.200" fill="#f4ce45" /><rect x="9" y="10" width="3" height="2" fill="#381c0e" /></symbol>
    </svg>

    <div v-for="(d, i) in desktop" :key="i" class="shortcut" :style="{ left: d.x + 'px', top: d.y + 'px' }">
      <div class="pict">
        <svg width="48" height="48" viewBox="0 0 48 48">
          <use :href="'#' + d.icon" width="48" height="48" />
          <text v-for="g in letters[d.icon]" :key="g.t" :x="g.x" :y="g.y" :font-size="g.s" :fill="g.c" :font-family="g.f" font-weight="bold">{{ g.t }}</text>
        </svg>
        <svg v-if="d.cut" class="cut" width="16" height="16"><use href="#cut" /></svg>
        <svg v-if="d.shield" class="shield" width="19" height="22"><use href="#shield" /></svg>
      </div>
      <div class="caption" :class="{ shift: d.shift }">
        <div v-for="l in d.lines" :key="l[0]"><span v-fit="l[1]" class="t">{{ l[0] }}</span></div>
      </div>
    </div>

    <aside class="taskbar">
      <svg class="orb" width="38" height="38"><use href="#orb" /></svg>
      <div v-for="p in pinned" :key="p.icon" class="task" :class="p.state">
        <svg width="32" height="32" viewBox="0 0 48 48">
          <use :href="'#' + p.icon" width="48" height="48" />
          <text v-for="g in letters[p.icon]" :key="g.t" :x="g.x" :y="g.y" :font-size="g.s" :fill="g.c" :font-family="g.f" font-weight="bold">{{ g.t }}</text>
        </svg>
      </div>
      <div class="tray">
        <svg v-for="t in tray" :key="t" width="16" height="16"><use :href="'#' + t" /></svg>
      </div>
      <div class="clock">
        <div><span v-fit="55" class="t">09:21 p.m.</span></div>
        <div><span v-fit="58" class="t">22/08/2022</span></div>
      </div>
      <div class="peek"></div>
    </aside>

    <main class="window">
      <div class="titlebar">
        <span class="wbtn"><svg width="30" height="16"><rect x="9.500" y="8.500" width="10" height="3" rx="1" fill="#fff" stroke="#4a5568" /></svg></span>
        <span class="wbtn"><svg width="30" height="16"><rect x="9.500" y="4.500" width="10" height="7" rx="1" fill="#fff" stroke="#4a5568" /><rect x="12.500" y="7" width="4" height="2" fill="#9ab4d0" stroke="#4a5568" /></svg></span>
        <span class="wbtn close"><svg width="30" height="16"><path d="M11.500 5 17.500 11.500M17.500 5 11.500 11.500" stroke="#50333a" stroke-width="4.500" stroke-linecap="square" /><path d="M11.500 5 17.500 11.500M17.500 5 11.500 11.500" stroke="#fff" stroke-width="2.500" stroke-linecap="square" /></svg></span>
      </div>

      <div class="address">
        <svg class="backfwd" width="71" height="28">
          <path d="M14 1H43A13 13 0 0 1 43 27H14A13 13 0 0 1 14 1" fill="#a5bbd3" stroke="#8299b5" />
          <circle cx="15" cy="14" r="12" fill="#103d9b" stroke="#e6effa" />
          <path d="M4 14A11 11 0 0 1 26 14Z" fill="#7792ce" /><path d="M6 20A11 11 0 0 0 24 20Z" fill="#21a4ef" />
          <path d="M22 14H9M14 8.500 8.500 14 14 19.500" fill="none" stroke="#fff" stroke-width="3" />
          <circle cx="43" cy="14" r="12" fill="#bbcbdc" stroke="#60758e" /><path d="M32 14A11 11 0 0 1 54 14Z" fill="#d7e1ec" />
          <path d="M36 14H49M44 8.500 49.500 14 44 19.500" fill="none" stroke="#e5edf5" stroke-width="3" />
          <path d="M59 12H68L63.500 17Z" fill="#258ac9" stroke="#174565" />
        </svg>
        <div class="path">
          <svg class="pfold" width="14" height="16"><path d="M.5 1.500 6 .500V15.500L.5 13.500ZM6 1.500H12V14H6Z" fill="#eed474" stroke="#c9a749" stroke-width=".7" /><path d="M3 1V14" stroke="#fff3b8" stroke-width="2" /><path d="M13 10V14" stroke="#63b1df" /></svg>
          <template v-for="c in crumbs" :key="c[0]">
            <svg class="crumb" width="23" height="8"><path d="M10 0 14 4 10 8Z" fill="#000" /></svg>
            <span v-fit="c[1]" class="t">{{ c[0] }}</span>
          </template>
          <svg class="drop" width="8" height="5"><path d="M0 0H8L4 4.500Z" fill="#0a0a4c" /></svg>
          <div class="refresh"><svg width="15" height="14"><path d="M0 5H8L4 9.500ZM3 6Q3 2 7 0V3Q6 3 5.500 6" fill="#2976bd" /><path d="M7.500 8H15.500L11.500 3.500ZM12.500 7Q12.500 12 8.500 14V11Q10 10 10 7" fill="#2976bd" /></svg></div>
        </div>
        <div class="search">
          <span v-fit="137" class="t">Buscar BroadBeanPlanetB</span>
          <svg width="13" height="13"><circle cx="8" cy="5" r="3.800" fill="#e9f4fb" stroke="#2873b8" stroke-width="1.700" /><path d="M5 8 1 12" stroke="#2b4d94" stroke-width="2.300" /></svg>
        </div>
      </div>

      <div class="toolbar">
        <span v-fit="51" class="t">Organizar</span>
        <svg class="a1" width="8" height="5"><path d="M0 0H8L4 4.500Z" fill="#1e395b" /></svg>
        <svg class="pv" width="16" height="14"><rect x="1.500" y="1.500" width="13" height="11" fill="#fff" stroke="#708aa6" /><rect x="3" y="3" width="10" height="8" fill="#9bd5ec" /><path d="M3 8Q8 6 13 9V11H3Z" fill="#245e64" /><path d="M0 3V0H3M13 0H16V3M16 11V14H13M3 14H0V11" fill="none" stroke="#347bbb" stroke-width="2" /></svg>
        <span v-fit="60" class="t b1">Vista previa</span>
        <span v-fit="47" class="t b2">Imprimir</span>
        <span v-fit="35" class="t b2">Grabar</span>
        <span v-fit="76" class="t b2">Nueva carpeta</span>
        <svg class="view" width="16" height="13"><path d="M.5.500H4V4H.5ZM.5 4.500H4V8.500H.5ZM.5 9H4V12.500H.5Z" fill="#fff" stroke="#87939f" stroke-width=".8" /><rect x="1.500" y="2" width="1.500" height="1.500" fill="#376f9c" /><rect x="1.500" y="6" width="1.500" height="1.500" fill="#c44" /><rect x="1.500" y="10" width="1.500" height="1.500" fill="#376f9c" /><path d="M6 2.500H10M11 2.500H15M6 6.500H10M11 6.500H15M6 10.500H10M11 10.500H15" stroke="#5c728a" /></svg>
        <svg class="a2" width="8" height="5"><path d="M0 0H8L4 4.500Z" fill="#1e395b" /></svg>
        <svg class="pane" width="16" height="14"><rect x=".5" y=".5" width="15" height="13" fill="#fff" stroke="#3e617c" /><path d="M1 3H15" stroke="#b2bfca" /><rect x="10" y="2" width="5" height="11" fill="#7ecbe4" stroke="#3b86a5" stroke-width=".7" /></svg>
        <svg class="help" width="17" height="17"><circle cx="8.500" cy="8.500" r="7.500" fill="#2345b4" stroke="#7e858e" stroke-width="1.500" /><circle cx="8.500" cy="8.500" r="6.300" fill="none" stroke="#dbe4f4" stroke-width=".7" /><text x="5" y="13" font-size="12" font-weight="bold" fill="#fff" font-family="Liberation Sans, sans-serif">?</text></svg>
      </div>

      <div class="content">
        <nav class="tree">
          <div v-for="(n, i) in nav" :key="i" class="node" :class="{ top: n.top, sel: n.sel }">
            <template v-if="n.t"><svg width="16" height="16"><use :href="'#' + n.icon" /></svg><span v-fit="n.w" class="t">{{ n.t }}</span></template>
          </div>
        </nav>
        <section class="list">
          <div class="head">
            <span><span v-fit="45" class="t">Nombre</span></span>
            <span><span v-fit="107" class="t">Fecha de modifica...</span></span>
            <span class="sorted"><svg width="8" height="4"><path d="M0 4 4 0 8 4Z" fill="#5b87a8" /></svg><span v-fit="24" class="t">Tipo</span></span>
            <span><span v-fit="44" class="t">Tamaño</span></span>
          </div>
          <div v-for="f in files" :key="f[1]" class="row" :class="f[8]">
            <span class="name"><svg width="16" height="16"><use :href="'#' + f[0]" /></svg><span v-fit="f[2]" class="t">{{ f[1] }}</span></span>
            <span><span v-fit="101" class="t">{{ f[3] }}</span></span>
            <span class="kind"><span v-fit="f[5]" class="t">{{ f[4] }}</span></span>
            <span class="size"><span v-fit="f[7]" class="t">{{ f[6] }}</span></span>
          </div>
        </section>
      </div>

      <footer class="details">
        <svg class="thumb" width="46" height="46">
          <filter id="grain" x="0" y="0" width="1" height="1"><feTurbulence type="fractalNoise" baseFrequency=".35" numOctaves="2" /><feColorMatrix values="0 0 0 0 .1  0 0 0 0 .3  0 0 0 0 .05  0 2.5 0 0 -1" /></filter>
          <rect x="2" y="2" width="43" height="43" fill="#aaa" opacity=".7" /><rect width="42" height="42" fill="#173414" /><rect x="1" y="1" width="42" height="42" rx="1" fill="#7cc45b" /><rect x="1" y="1" width="42" height="42" filter="url(#grain)" opacity=".3" />
        </svg>
        <div class="count"><span v-fit="158" class="t">2 elementos seleccionados</span></div>
        <div class="meta k"><div><span v-fit="93" class="t">Fecha de captura:</span></div><div><span v-fit="71" class="t">Dimensiones:</span></div></div>
        <div class="meta v"><div><span v-fit="135" class="t">Especificar la fecha de c...</span></div><div><span v-fit="97" class="t">(valores múltiples)</span></div></div>
        <div class="meta last"><div><span v-fit="47" class="t k">Tamaño:</span><span v-fit="39" class="t">22,8 KB</span></div></div>
      </footer>
    </main>

    <div class="note"><span v-fit="379">Textures used by material</span></div>
    <div class="marker"></div>
  </div>
</template>

<style>
html, body { margin: 0; background: #000; overflow: hidden; }
</style>

<style scoped>
.screen { position: relative; width: 1280px; height: 800px; overflow: hidden; background: #000; font: 12px/15px "Open Sans", "Noto Sans", sans-serif; color: #000; }
.screen svg { display: block; flex: none; }
.defs { position: absolute; }
.t, .note span { display: inline-block; white-space: pre; flex: none; }

.shortcut { position: absolute; width: 48px; }
.pict { position: relative; height: 48px; }
.cut { position: absolute; left: 0; bottom: 0; }
.shield { position: absolute; right: 2px; bottom: 1px; }
.caption { margin: 3px -24px 0 -25px; display: flex; flex-direction: column; align-items: center; color: #fff; white-space: nowrap; }
.caption.shift { padding-left: 33px; }

.taskbar { position: absolute; left: 0; top: 0; box-sizing: border-box; width: 62px; height: 800px; display: flex; flex-direction: column; border-right: 1px solid #c8d8ea; box-shadow: inset -1px 0 #8397af; background: linear-gradient(#8090a8 0, #8698b0 55px, #a4bcd9 105px, #a8c0dd 300px, #a8c0dd 600px, #a0b8d4 625px, #8395ad 660px, #8092aa 760px); }
.orb { margin: 9px 0 0 12px; height: 38px; }
.task { height: 46px; margin-bottom: 2px; box-sizing: border-box; display: flex; align-items: center; justify-content: center; flex: none; }
.task:nth-of-type(1) { margin-top: 15px; }
.task svg { width: 31px; height: 31px; }
.task.active svg, .task.open svg { width: 32px; height: 32px; }
.task.active, .task.open { border: 1px solid #48566a; border-radius: 3px; box-shadow: inset 0 0 0 1px #e9f1fa; }
.task.active { background: linear-gradient(135deg, #f7fafd, #dbe5f1 50%, #c6d5e7); }
.task.open { background: linear-gradient(150deg, #ccd9ea, #b2c5dd 50%, #a9bfdb); }
.tray { margin-top: auto; padding: 0 9px 0 12px; display: grid; grid-template-columns: 24px 16px; row-gap: 8px; }
.tray svg { width: 16px; height: 16px; }
.clock { margin-top: 5px; height: 35px; line-height: 17px; text-align: center; color: #fff; white-space: nowrap; padding-right: 1px; }
.peek { height: 15px; margin-right: 1px; border: 1px solid #35475c; box-shadow: inset 0 0 0 1px #a9b9ca; background: linear-gradient(90deg, #8192a4, #b0bfce 35%, #748398); box-sizing: border-box; }

.window { position: absolute; left: 245px; top: 98px; width: 877px; height: 575px; box-sizing: border-box; border: 1px solid #fff; border-right-color: #42cde5; border-bottom-color: #27c5df; border-radius: 7px 7px 0 0; background: linear-gradient(#98b4d3 0, #b2cae5 22px, #bad1ea 40px, #bad1ea 100%); padding: 0 6px 6px; display: flex; flex-direction: column; box-shadow: inset 0 1px #dceafa; }
.titlebar { height: 32px; display: flex; justify-content: flex-end; gap: 2px; padding: 8px 2px 0 0; box-sizing: border-box; }
.wbtn { width: 31px; height: 17px; box-sizing: border-box; border: 1px solid #536985; border-radius: 3px; box-shadow: inset 0 0 0 1px #d3e1f1; background: linear-gradient(#bdd0e7 45%, #96b0ce 50%, #b7cce5); }
.wbtn svg { margin-top: -1px; }
.wbtn.close { border-color: #571d28; box-shadow: inset 0 0 0 1px #eab0a7; background: linear-gradient(#e39b90 45%, #bd402c 50%, #cf6953); }
.address { height: 31px; display: flex; align-items: flex-start; }
.backfwd { margin: -2px 0 0 0; }
.path, .search { box-sizing: border-box; height: 22px; border: 1px solid; border-color: #4c5d72 #8093ab #a4b8cd #66788e; background: #ecf2fa; display: flex; align-items: center; box-shadow: 0 0 0 1px #cddef0; margin-top: 1px; }
.path { width: 543px; }
.pfold { margin-left: 4px; }
.crumb:nth-of-type(2) { margin-left: -2px; }
.path > .drop { margin-left: auto; margin-right: 5px; }
.refresh { width: 24px; height: 20px; border-left: 1px solid #66788e; display: flex; align-items: center; justify-content: center; }
.search { width: 242px; margin-left: 6px; justify-content: space-between; padding: 0 5px 0 8px; color: #707780; font-style: italic; }
.toolbar { height: 31px; flex: none; box-sizing: border-box; border-top: 1px solid #d5e3f2; border-bottom: 1px solid #a5b9d3; background: linear-gradient(#fafcfe, #ebf3fc 45%, #dce7f5 50%, #dae5f3); display: flex; align-items: center; color: #1e395b; padding: 0 0 1px 18px; }
.a1 { margin-left: 5px; }
.pv { margin-left: 31px; }
.b1 { margin-left: 4px; }
.b2 { margin-left: 29.500px; }
.view { margin-left: auto; }
.a2 { margin-left: 9px; }
.pane { margin-left: 22px; }
.help { margin-left: 20px; margin-right: 14px; }
.content { flex: 1; display: flex; background: #fcfcfc; min-height: 0; }
.tree { width: 180px; box-sizing: content-box; border-right: 1px solid #d3e3f5; padding-top: 9px; }
.node { height: 21px; box-sizing: border-box; display: flex; align-items: center; gap: 5px; padding-left: 28px; margin: 0 1px; border: 1px solid transparent; }
.node.top { padding-left: 18px; }
.node.sel { border-color: #d9d9d9; border-radius: 3px; background: linear-gradient(#f9f9f9, #e6e6e6); }
.list { flex: 1; padding-left: 15px; }
.head { height: 31px; display: grid; grid-template-columns: 308px 120px 120px 80px; color: #4c607a; }
.head > span { height: 20px; line-height: 15px; box-sizing: border-box; padding: 5px 0 0 6px; border-right: 1px solid #e3edf8; }
.head > span:first-child { padding-left: 3px; }
.head .sorted { position: relative; }
.head > span:last-child { padding-left: 7px; }
.sorted svg { position: absolute; left: 55px; top: 1px; }
.row { width: 624px; height: 21px; box-sizing: border-box; border: 1px solid transparent; border-radius: 3px; display: grid; grid-template-columns: 312px 120px 120px 67px; align-items: center; color: #6d6d6d; }
.name { display: flex; align-items: center; gap: 4px; padding-left: 3px; color: #000; }
.kind { padding-left: 1px; }
.size { text-align: right; }
.row.strong { border-color: #7da2ce; background: linear-gradient(#dcebfc, #c1dbfc); box-shadow: inset 0 0 0 1px #e7f2fe; }
.row.soft { border-color: #84acdd; background: linear-gradient(#eaf3fe, #cfe3fd); box-shadow: inset 0 0 0 1px #f1f7ff; }
.details { height: 52px; flex: none; border-top: 1px solid #c5d5e8; box-shadow: inset 0 2px #e3ecf7; background: #f0f4fc; display: flex; padding-left: 18px; color: #1e395b; }
.thumb { margin-top: 3px; }
.count { font-size: 13px; margin: 7px 0 0 15px; }
.meta { margin-top: 6px; line-height: 18px; }
.k { color: #5a6779; }
.meta.k { text-align: right; margin-left: 6px; }
.meta.v { margin-left: 5px; width: 188px; }
.meta.last .k { margin-right: 4px; }

.note { position: absolute; left: 22px; top: 366px; box-sizing: border-box; width: 393px; height: 48px; padding: 1px 1px 0 0; background: #fff; border-radius: 2px; box-shadow: 2px 3px 4px rgba(50, 50, 50, .75); color: #f00; font: bold 31px/48px "Liberation Sans", Arial, sans-serif; text-align: center; }
.marker { position: absolute; left: 423px; top: 373px; width: 17px; height: 40px; border-radius: 2px; background: #f00; box-shadow: 2px 2px 3px rgba(70, 70, 70, .7); }
</style>
